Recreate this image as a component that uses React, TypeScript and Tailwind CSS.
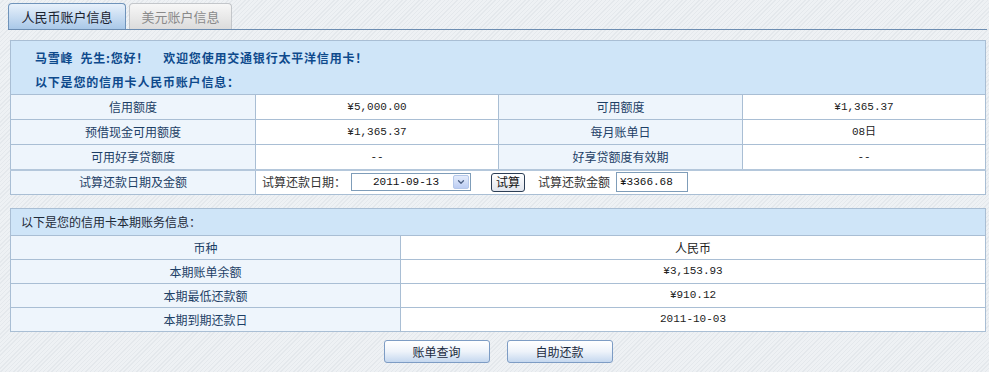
import { ChevronDown } from "lucide-react";

const label = "border border-[#a9bed4] bg-[#eef5fc] text-center text-[#1d3f66]";
const value =
  "border border-[#a9bed4] bg-white text-center text-[#222] font-['Liberation_Mono','Noto_Sans_CJK_SC',monospace] text-[11px]";

function SummaryTable() {
  return (
    <table className="w-[976px] border-collapse text-[12px]">
      <tbody>
        <tr>
          <td
            colSpan={4}
            className="h-[53px] border border-[#a9bed4] bg-[#cfe5f8] pl-[24px] align-top font-bold tracking-[0.8px] text-[#0e4a8c]"
          >
            <div className="pt-[4px] leading-[25px]">
              马雪峰&nbsp;&nbsp;先生:您好！&nbsp;&nbsp;&nbsp;&nbsp;欢迎您使用交通银行太平洋信用卡！
            </div>
            <div className="leading-[24px]">以下是您的信用卡人民币账户信息：</div>
          </td>
        </tr>
        <tr className="h-[25px]">
          <td className={`${label} w-[245px]`}>信用额度</td>
          <td className={`${value} w-[243px]`}>¥5,000.00</td>
          <td className={`${label} w-[244px]`}>可用额度</td>
          <td className={value}>¥1,365.37</td>
        </tr>
        <tr className="h-[25px]">
          <td className={label}>预借现金可用额度</td>
          <td className={value}>¥1,365.37</td>
          <td className={label}>每月账单日</td>
          <td className={value}>08日</td>
        </tr>
        <tr className="h-[25px]">
          <td className={label}>可用好享贷额度</td>
          <td className={value}>--</td>
          <td className={label}>好享贷额度有效期</td>
          <td className={value}>--</td>
        </tr>
        <tr className="h-[25px] border-t-2 border-t-[#b4c7db]">
          <td className={label}>试算还款日期及金额</td>
          <td colSpan={3} className="border border-[#a9bed4] bg-white text-[12px] text-[#333]">
            <div className="flex items-center pl-[6px]">
              <span className="w-[89px]">试算还款日期：</span>
              <div className="flex h-[18px] w-[120px] items-center border border-[#7f9db9] bg-white">
                <span className="flex-1 pl-[21px] font-['Liberation_Mono',monospace] text-[11px] text-[#111]">
                  2011-09-13
                </span>
                <span className="mr-[1px] flex h-[14px] w-[16px] items-center justify-center rounded-[2px] border border-[#b5c8ea] bg-gradient-to-b from-[#e4ecfb] to-[#bccdf3]">
                  <ChevronDown className="h-[10px] w-[10px] text-[#4d6185]" strokeWidth={3} />
                </span>
              </div>
              <button className="ml-[20px] flex h-[19px] w-[34px] items-center justify-center rounded-[3px] border border-[#2c3e55] bg-gradient-to-b from-white to-[#e2e6ee] text-[12px] leading-none text-[#111]">
                试算
              </button>
              <span className="ml-[13px] w-[78px]">试算还款金额</span>
              <div className="flex h-[20px] w-[72px] items-center border border-[#7f9db9] bg-white pl-[3px] font-['Liberation_Mono',monospace] text-[11px] text-[#111]">
                ¥3366.68
              </div>
            </div>
          </td>
        </tr>
      </tbody>
    </table>
  );
}

function BillTable() {
  const rows = [
    ["币种", "人民币"],
    ["本期账单余额", "¥3,153.93"],
    ["本期最低还款额", "¥910.12"],
    ["本期到期还款日", "2011-10-03"],
  ];
  return (
    <table className="w-[976px] border-collapse text-[12px]">
      <tbody>
        <tr>
          <td colSpan={2} className="h-[27px] border border-[#a9bed4] bg-[#cfe5f8] pl-[10px] text-[#1e2a38]">
            以下是您的信用卡本期账务信息：
          </td>
        </tr>
        {rows.map(([k, v], i) => (
          <tr key={k} className="h-[24px]">
            <td className={`${label} w-[390px]`}>{k}</td>
            <td className={i === 0 ? "border border-[#a9bed4] bg-white text-center text-[#222]" : value}>{v}</td>
          </tr>
        ))}
      </tbody>
    </table>
  );
}

function ActionButton({ children }: { children: string }) {
  return (
    <button className="h-[23px] w-[106px] rounded-[3px] border border-[#7d9cc4] bg-gradient-to-b from-white via-[#eef3fa] to-[#c5d8ef] text-[12px] text-[#1a2a40]">
      {children}
    </button>
  );
}

export default function App() {
  return (
    <div className="h-[372px] w-[989px] overflow-hidden bg-[repeating-linear-gradient(135deg,#eef1f4_0px,#eef1f4_2px,#e4e8ec_2px,#e4e8ec_3px)] font-['Noto_Sans_CJK_SC','Noto_Sans',sans-serif]">
      <div className="ml-[8px] mr-[2px] flex gap-[3px] border-b border-[#6c8db2] pt-[3px]">
        <div className="flex h-[26px] w-[118px] items-center justify-center rounded-t-[4px] border border-b-0 border-[#6f93ba] bg-gradient-to-b from-[#e8f1fb] to-[#a9c8e8] text-[13px] text-[#1a2330]">
          人民币账户信息
        </div>
        <div className="flex h-[26px] w-[103px] items-center justify-center rounded-t-[4px] border border-b-0 border-[#c3c6ca] bg-gradient-to-b from-[#f7f7f7] to-[#dcdcdc] text-[13px] text-[#8a8a8a]">
          美元账户信息
        </div>
      </div>
      <div className="ml-[10px] mt-[10px]">
        <SummaryTable />
      </div>
      <div className="ml-[10px] mt-[13px]">
        <BillTable />
      </div>
      <div className="ml-[10px] mt-[8px] flex w-[976px] justify-center gap-[17px]">
        <ActionButton>账单查询</ActionButton>
        <ActionButton>自助还款</ActionButton>
      </div>
    </div>
  );
}
